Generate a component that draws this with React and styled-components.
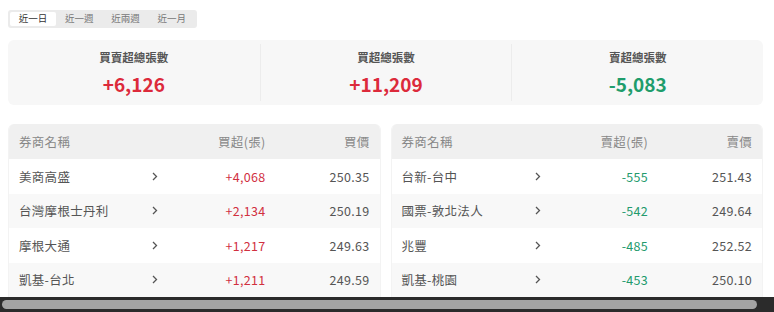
import React from "react";
import styled, { createGlobalStyle } from "styled-components";

const Global = createGlobalStyle`
  html, body { margin: 0; padding: 0; background: #fff; }
  body { font-family: "Noto Sans CJK TC", "Noto Sans", sans-serif; overflow: hidden; }
  * { box-sizing: border-box; }
`;

const Page = styled.div`
  width: 774px;
  height: 312px;
  display: flex;
  flex-direction: column;
  overflow: hidden;
`;

const Content = styled.div`
  flex: 1;
  overflow: hidden;
  padding: 10px 11px 0 8px;
  display: flex;
  flex-direction: column;
  & > * { flex-shrink: 0; }
`;

const Tabs = styled.div`
  align-self: flex-start;
  display: flex;
  padding: 2px;
  background: #ebebeb;
  border-radius: 3px;
  height: 18px;
`;

const Tab = styled.div`
  width: 46.25px;
  height: 14px;
  display: flex;
  align-items: center;
  justify-content: center;
  font-size: 9.5px;
  line-height: 1;
  border-radius: 2px;
  color: ${(p) => (p.$active ? "#333" : "#777")};
  background: ${(p) => (p.$active ? "#fff" : "transparent")};
`;

const Summary = styled.div`
  margin-top: 12px;
  height: 65px;
  background: #f7f7f7;
  border-radius: 6px;
  display: grid;
  grid-template-columns: repeat(3, 1fr);
  padding: 4px 0;
`;

const Stat = styled.div`
  display: flex;
  flex-direction: column;
  align-items: center;
  justify-content: center;
  gap: 5px;
  border-left: ${(p) => (p.$first ? "none" : "1px solid #ececec")};
`;

const StatTitle = styled.div`
  font-size: 11.5px;
  font-weight: 700;
  color: #555;
  line-height: 18px;
`;

const StatValue = styled.div`
  font-size: 19px;
  font-weight: 700;
  line-height: 26px;
  color: ${(p) => (p.$up ? "#dc2a3b" : "#1f9d6c")};
`;

const Tables = styled.div`
  margin-top: 19px;
  display: grid;
  grid-template-columns: 1fr 1fr;
  gap: 10px;
`;

const Table = styled.div`
  border-radius: 6px 6px 0 0;
  overflow: hidden;
  border: 1px solid #f3f3f3;
  border-top: none;
`;

const Row = styled.div`
  display: grid;
  grid-template-columns: 130px 22px 1fr 104px;
  align-items: center;
  padding: 0 10px;
  height: ${(p) => (p.$head ? "35px" : "34.5px")};
  background: ${(p) => (p.$head ? "#f0f0f0" : p.$alt ? "#f8f8f8" : "#fff")};
  font-size: 12.5px;
  color: ${(p) => (p.$head ? "#888" : "#555")};
`;

const Name = styled.div`
  white-space: nowrap;
  letter-spacing: 0.3px;
`;

const Chevron = styled.div`
  display: flex;
  align-items: center;
  justify-content: flex-start;
  padding-left: 3px;
  color: #555;
`;

const Num = styled.div`
  text-align: right;
  letter-spacing: 0.3px;
  color: ${(p) => (p.$tone === "up" ? "#d1303f" : p.$tone === "down" ? "#229a6c" : "inherit")};
`;

const Scrollbar = styled.div`
  flex-shrink: 0;
  height: 15px;
  background: #2b2b2b;
  padding: 3px 17px 3px 2px;
`;

const Thumb = styled.div`
  height: 100%;
  background: #a3a3a3;
  border-radius: 5px;
`;

const ChevronIcon = () => (
  <svg width="6" height="9" viewBox="0 0 6 9" fill="none">
    <path d="M1 1l3.5 3.5L1 8" stroke="#555" strokeWidth="1.3" />
  </svg>
);

const buy = [
  ["美商高盛", "+4,068", "250.35"],
  ["台灣摩根士丹利", "+2,134", "250.19"],
  ["摩根大通", "+1,217", "249.63"],
  ["凱基-台北", "+1,211", "249.59"],
];

const sell = [
  ["台新-台中", "-555", "251.43"],
  ["國票-敦北法人", "-542", "249.64"],
  ["兆豐", "-485", "252.52"],
  ["凱基-桃園", "-453", "250.10"],
];

const BrokerTable = ({ head, rows, tone }) => (
  <Table>
    <Row $head>
      <Name>券商名稱</Name>
      <div />
      <Num>{head[0]}</Num>
      <Num>{head[1]}</Num>
    </Row>
    {rows.map((r, i) => (
      <Row key={r[0]} $alt={i % 2 === 1}>
        <Name>{r[0]}</Name>
        <Chevron>
          <ChevronIcon />
        </Chevron>
        <Num $tone={tone}>{r[1]}</Num>
        <Num>{r[2]}</Num>
      </Row>
    ))}
  </Table>
);

export default function App() {
  return (
    <Page>
      <Global />
      <Content>
        <Tabs>
          <Tab $active>近一日</Tab>
          <Tab>近一週</Tab>
          <Tab>近兩週</Tab>
          <Tab>近一月</Tab>
        </Tabs>
        <Summary>
          <Stat $first>
            <StatTitle>買賣超總張數</StatTitle>
            <StatValue $up>+6,126</StatValue>
          </Stat>
          <Stat>
            <StatTitle>買超總張數</StatTitle>
            <StatValue $up>+11,209</StatValue>
          </Stat>
          <Stat>
            <StatTitle>賣超總張數</StatTitle>
            <StatValue>-5,083</StatValue>
          </Stat>
        </Summary>
        <Tables>
          <BrokerTable head={["買超(張)", "買價"]} rows={buy} tone="up" />
          <BrokerTable head={["賣超(張)", "賣價"]} rows={sell} tone="down" />
        </Tables>
      </Content>
      <Scrollbar>
        <Thumb />
      </Scrollbar>
    </Page>
  );
}
